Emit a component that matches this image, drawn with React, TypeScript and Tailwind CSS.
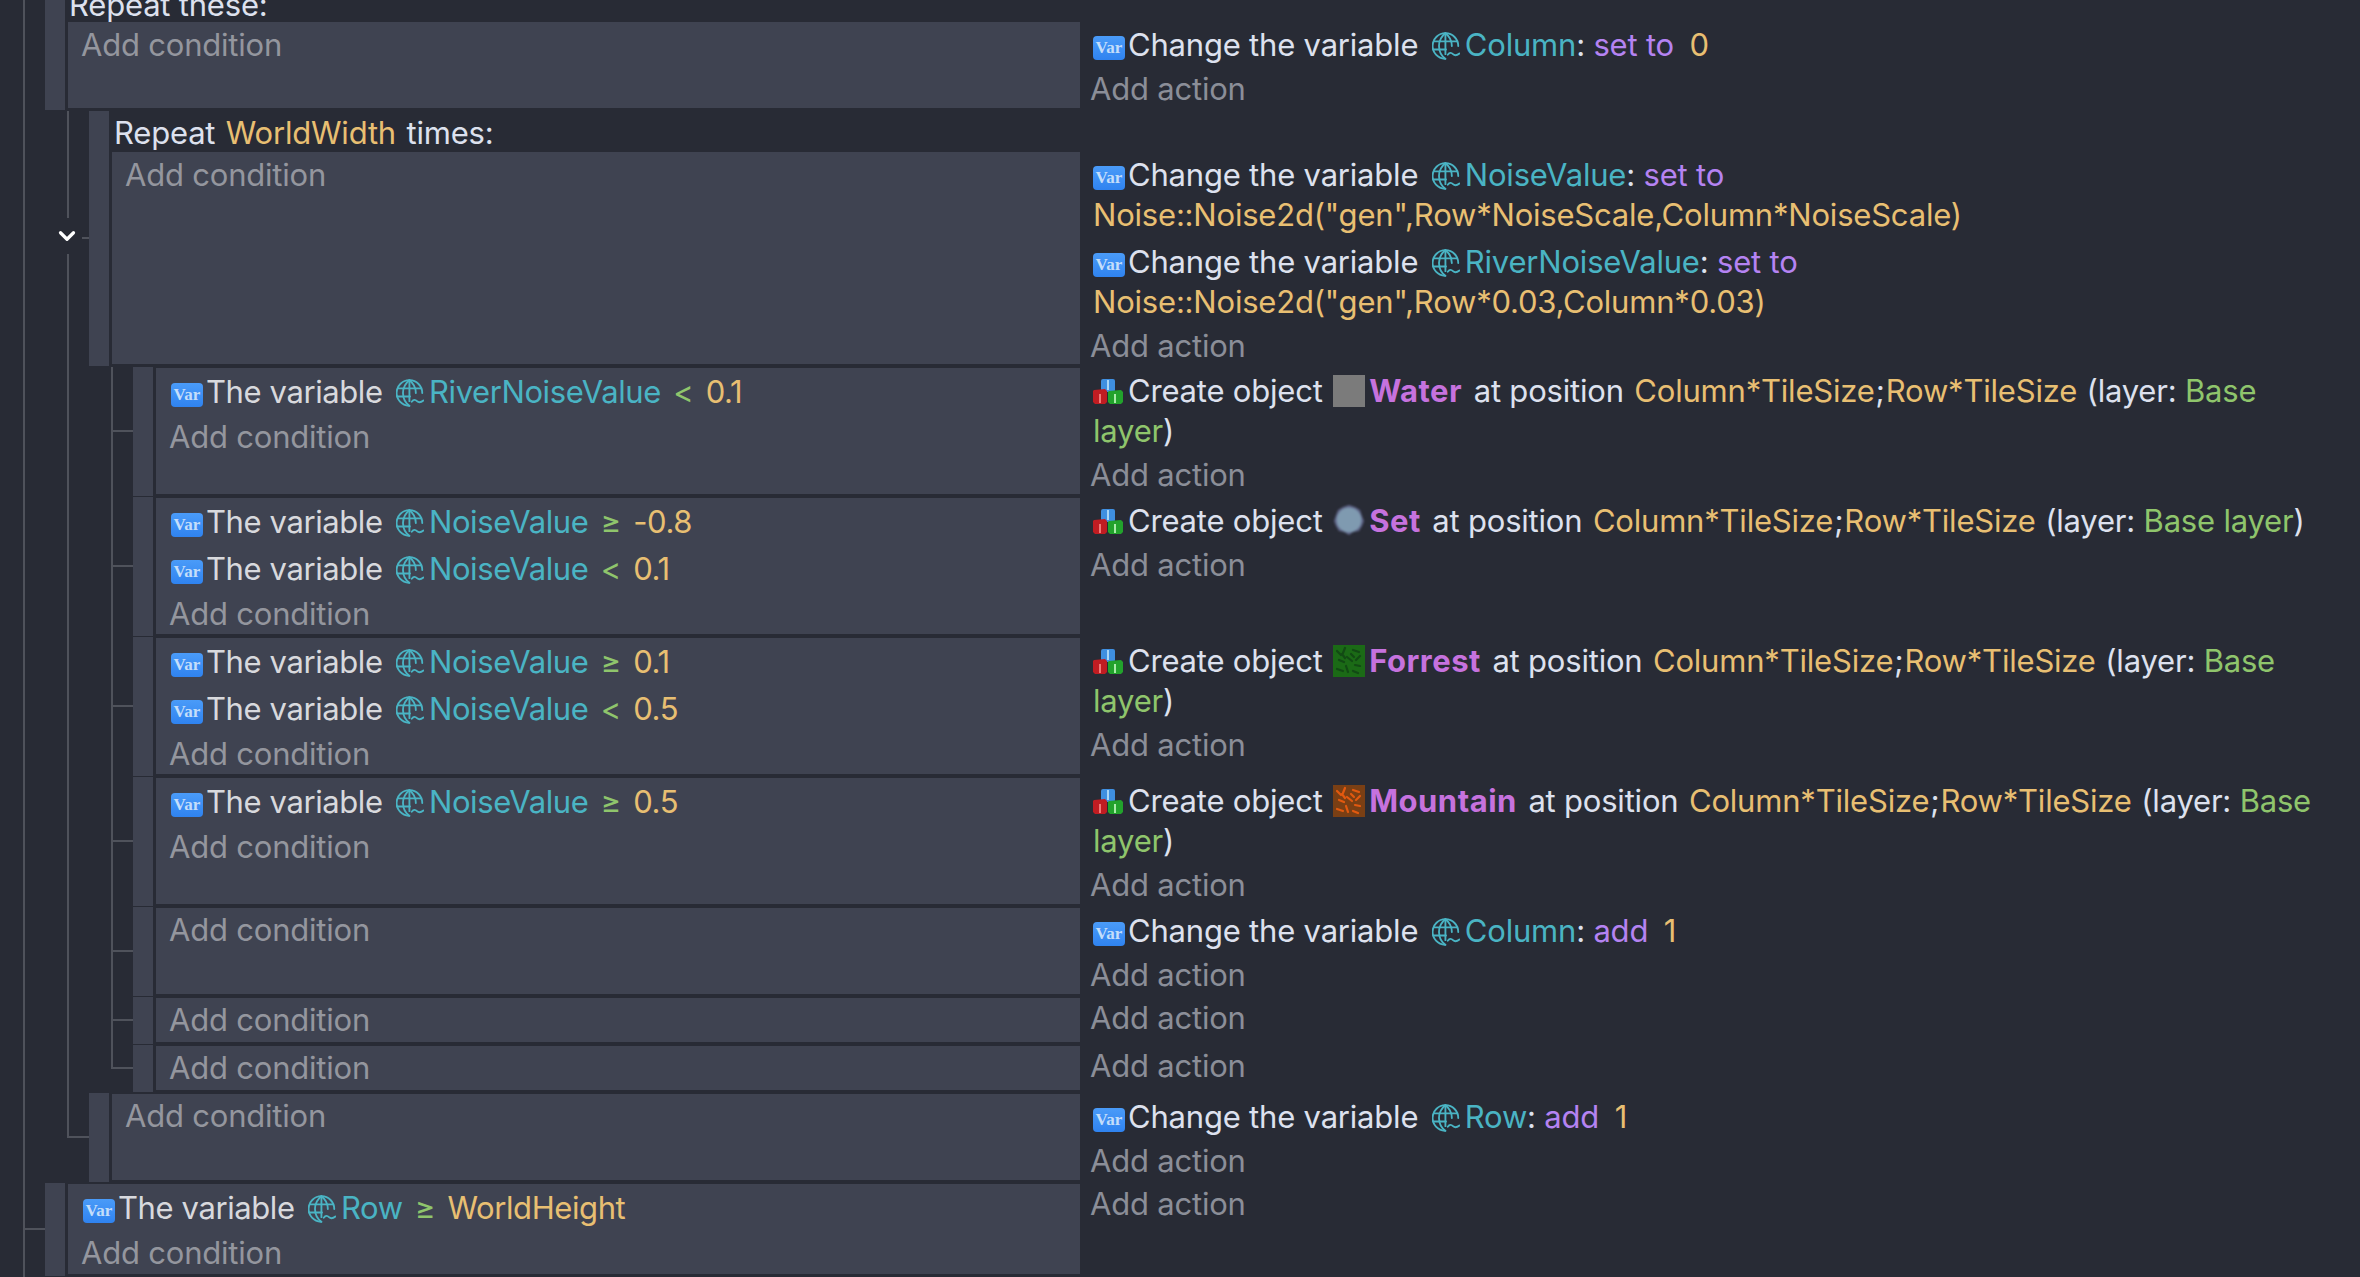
import * as React from 'react'
import { ChevronDown } from 'lucide-react'

type Guide = 'pass' | 'tick' | 'end' | 'chevron'

// small inline pieces of the event sheet text
const Val = ({ children, gap }: { children: React.ReactNode; gap?: boolean }) => (
  <span className={gap ? 'ml-[7px] text-[#e8bf72]' : 'text-[#e8bf72]'}>{children}</span>
)
const Op = ({ children }: { children: React.ReactNode }) => (
  <span className="mx-[4px] text-[#8fc56c]">{children}</span>
)
const Mode = ({ children }: { children: React.ReactNode }) => <span className="text-[#b583f2]">{children}</span>
const Layer = ({ children }: { children: React.ReactNode }) => <span className="text-[#8fc56c]">{children}</span>
const Obj = ({ children }: { children: React.ReactNode }) => (
  <span className="mr-[3px] font-bold tracking-[0.5px] text-[#c672de]">{children}</span>
)

// the tail shared by all "Create object" actions
const AtPosition = () => (
  <>
    {' '}
    at position <span className="ml-[2px]" />
    <Val>Column*TileSize</Val>
    <span className="mx-[1px]">;</span>
    <Val>Row*TileSize</Val> <span className="ml-[1px]">(layer:</span> <Layer>Base layer</Layer>)
  </>
)

function VarIcon() {
  return (
    <span className="mr-[3px] inline-flex h-[24px] w-[32px] items-center justify-center rounded-[4px] bg-linear-to-b from-[#4a9bf8] to-[#2f83f0] align-[3px] font-['Liberation_Serif',serif] text-[17px] leading-none font-bold tracking-normal text-[#c4defa]">
      Var
    </span>
  )
}

function GlobeVar({ children }: { children: React.ReactNode }) {
  return (
    <span className="text-[#4ab4c4]">
      <svg viewBox="2 2 24 24" className="mr-[5px] ml-[5px] inline-block h-[28px] w-[28px] align-[-4px]" fill="none" stroke="currentColor" strokeWidth="1.6" strokeLinecap="round">
        <path d="M24.5 14A11 11 0 1 0 13 25" />
        <path d="M13.5 3C9.5 6 8 10 8 14s1.5 8 5.5 11" />
        <path d="M13.5 3c4 3 5.500 7 5.500 11" />
        <path d="M13.500 3v18" />
        <path d="M3.500 10h20M3 17h11" />
        <path d="M15.500 21.500c1.500-2 3-2 4.500-.5s3 1.500 5.500-.5" />
      </svg>
      {children}
    </span>
  )
}

function CreateIcon() {
  return (
    <svg viewBox="0 0 30 26" className="mr-[5px] inline-block h-[26px] w-[30px] align-[-3px]">
      <rect x="8" y="0" width="14" height="13" rx="2" fill="#3f8fe0" />
      <rect x="14" y="1" width="2" height="10" fill="#a8d6f7" />
      <path d="M1 11l11-1 2 2v11l-2 2H2l-2-2V12z" fill="#c01c22" />
      <rect x="6" y="15" width="2" height="9" fill="#f07878" />
      <path d="M16 12l12-1 2 2v10l-2 2H17l-2-2V13z" fill="#22a32c" />
      <rect x="21" y="15" width="2" height="9" fill="#a8eca8" />
    </svg>
  )
}

function Texture({ base, spot }: { base: string; spot: string }) {
  const marks = 'M4 6l4 4M12 3l-2 5M20 5l6 2M27 11l-4 4M6 15l5 2M14 12l5 4M22 20l5 1M4 24l6 2M13 21l2 6M20 26l5 2M9 9l3 4M18 9l3 3'
  return (
    <svg viewBox="0 0 32 32" className="mr-[4px] ml-[2px] inline-block h-[32px] w-[32px] align-[-5px]">
      <rect width="32" height="32" fill={base} />
      <path d={marks} stroke={spot} strokeWidth="2.200" strokeLinecap="round" />
    </svg>
  )
}

function WaterIcon() {
  return <span className="mr-[4px] ml-[2px] inline-block h-[32px] w-[32px] bg-[#7b7b7b] align-[-5px]" />
}

function SetIcon() {
  return (
    <svg viewBox="0 0 32 32" className="mr-[4px] ml-[2px] inline-block h-[32px] w-[32px] align-[-5px] blur-[1px]">
      <path d="M10 2l6-2 6 2 5 3 2 6 2 5-2 5-3 5-6 1-4 3-5-3-5-1-3-5-2-5 2-6 2-5z" fill="#5f6488" />
      <circle cx="16" cy="15" r="12.500" fill="#7f9ab0" />
    </svg>
  )
}

const Add = ({ children, cond }: { children: React.ReactNode; cond?: boolean }) => (
  <div className={cond ? 'pt-[2px] pl-[13px] text-[#94969e]' : 'pl-[10px] text-[#8b8e98]'}>{children}</div>
)

const Cond = ({ children }: { children: React.ReactNode }) => (
  <div className="pt-[4px] pb-[3px] pl-[15px] tracking-[-0.4px] text-[#d8d9dd]">
    <VarIcon />
    {children}
  </div>
)

const Act = ({ children, icon }: { children: React.ReactNode; icon?: 'var' | 'create' }) => (
  <div className="pt-[3px] pb-[4px] pl-[13px] text-[#dde1ee]">
    {icon === 'create' ? <CreateIcon /> : <VarIcon />}
    {children}
  </div>
)

function GuideCell({ kind, last }: { kind: Guide; last: boolean }) {
  const width = last ? 'w-[22px]' : 'w-[44px]'
  if (kind === 'end') {
    return (
      <div className={`${width} shrink-0`}>
        <div className="h-1/2 border-b-2 border-l-2 border-[#4f525b]" />
      </div>
    )
  }
  return (
    <div className={`${width} relative shrink-0 border-l-2 border-[#4f525b]`}>
      {(kind === 'tick' || kind === 'chevron') && <div className="h-1/2 border-b-2 border-[#4f525b]" />}
      {kind === 'chevron' && (
        <div className="absolute top-[107px] left-[-17px] flex h-[36px] w-[30px] items-center justify-center bg-[#282b35] text-white">
          <ChevronDown size={26} strokeWidth={3} />
        </div>
      )}
    </div>
  )
}

interface EventRowProps {
  guides: Guide[]
  heightClass: string
  header?: React.ReactNode
  conditions: React.ReactNode
  actions: React.ReactNode
  panelClass?: string
}

function EventRow({ guides, heightClass, header, conditions, actions, panelClass }: EventRowProps) {
  return (
    <div className={`flex ${heightClass} shrink-0`}>
      <div className="flex w-[1080px] shrink-0 pl-[23px]">
        {guides.map((g, i) => (
          <GuideCell key={i} kind={g} last={i === guides.length - 1} />
        ))}
        <div className="flex min-w-0 flex-1 pb-[1px]">
          <div className="w-[20px] shrink-0 bg-[#3f4351]" />
          <div className={`ml-[3px] flex min-w-0 flex-1 flex-col pb-[2px] ${header ? '' : 'pt-[1px]'}`}>
            {header}
            <div className={`flex-1 bg-[#3f4351] ${header ? 'pt-[1px]' : ''}`}>{conditions}</div>
          </div>
        </div>
      </div>
      <div className={`flex-1 pr-[40px] ${header ? panelClass === 'top' ? 'pt-[22px]' : 'pt-[41px]' : 'pt-[1px]'}`}>{actions}</div>
    </div>
  )
}

export default function App() {
  return (
    <div className="flex h-[1277px] w-[2360px] flex-col overflow-hidden bg-[#282b35] font-['Inter',sans-serif] text-[31px] leading-[40px] tracking-[-0.2px] text-[#dde1ee]">
      <EventRow
        guides={['pass']}
        heightClass="h-[111px]"
        panelClass="top"
        header={
          <div className="flex h-[22px] items-end">
            <span className="-mb-[3px] pl-[1px]">Repeat these:</span>
          </div>
        }
        conditions={<Add cond>Add condition</Add>}
        actions={
          <>
            <Act>
              Change the variable <GlobeVar>Column</GlobeVar>: <Mode>set to</Mode> <Val gap>0</Val>
            </Act>
            <Add>Add action</Add>
          </>
        }
      />
      <EventRow
        guides={['pass', 'chevron']}
        heightClass="h-[256px]"
        header={
          <div className="flex h-[41px] items-end">
            <span className="-mb-[1px] pl-[2px]">
              Repeat{' '}
              <span className="mx-[2px]">
                <Val>WorldWidth</Val>
              </span>{' '}
              times:
            </span>
          </div>
        }
        conditions={<Add cond>Add condition</Add>}
        actions={
          <>
            <Act>
              Change the variable <GlobeVar>NoiseValue</GlobeVar>: <Mode>set to</Mode>{' '}
              <Val>Noise::Noise2d("gen",Row*NoiseScale,Column*NoiseScale)</Val>
            </Act>
            <Act>
              Change the variable <GlobeVar>RiverNoiseValue</GlobeVar>: <Mode>set to</Mode>{' '}
              <Val>Noise::Noise2d("gen",Row*0.03,Column*0.03)</Val>
            </Act>
            <Add>Add action</Add>
          </>
        }
      />
      <EventRow
        guides={['pass', 'pass', 'tick']}
        heightClass="h-[130px]"
        conditions={
          <>
            <Cond>
              The variable <GlobeVar>RiverNoiseValue</GlobeVar> <Op>&lt;</Op> <Val>0.1</Val>
            </Cond>
            <Add cond>Add condition</Add>
          </>
        }
        actions={
          <>
            <Act icon="create">
              Create object <WaterIcon />
              <Obj>Water</Obj>
              <AtPosition />
            </Act>
            <Add>Add action</Add>
          </>
        }
      />
      <EventRow
        guides={['pass', 'pass', 'tick']}
        heightClass="h-[140px]"
        conditions={
          <>
            <Cond>
              The variable <GlobeVar>NoiseValue</GlobeVar> <Op>≥</Op> <Val>-0.8</Val>
            </Cond>
            <Cond>
              The variable <GlobeVar>NoiseValue</GlobeVar> <Op>&lt;</Op> <Val>0.1</Val>
            </Cond>
            <Add cond>Add condition</Add>
          </>
        }
        actions={
          <>
            <Act icon="create">
              Create object <SetIcon />
              <Obj>Set</Obj>
              <AtPosition />
            </Act>
            <Add>Add action</Add>
          </>
        }
      />
      <EventRow
        guides={['pass', 'pass', 'tick']}
        heightClass="h-[140px]"
        conditions={
          <>
            <Cond>
              The variable <GlobeVar>NoiseValue</GlobeVar> <Op>≥</Op> <Val>0.1</Val>
            </Cond>
            <Cond>
              The variable <GlobeVar>NoiseValue</GlobeVar> <Op>&lt;</Op> <Val>0.5</Val>
            </Cond>
            <Add cond>Add condition</Add>
          </>
        }
        actions={
          <>
            <Act icon="create">
              Create object <Texture base="#1b6a16" spot="#124a14" />
              <Obj>Forrest</Obj>
              <AtPosition />
            </Act>
            <Add>Add action</Add>
          </>
        }
      />
      <EventRow
        guides={['pass', 'pass', 'tick']}
        heightClass="h-[130px]"
        conditions={
          <>
            <Cond>
              The variable <GlobeVar>NoiseValue</GlobeVar> <Op>≥</Op> <Val>0.5</Val>
            </Cond>
            <Add cond>Add condition</Add>
          </>
        }
        actions={
          <>
            <Act icon="create">
              Create object <Texture base="#7a3f14" spot="#e2590f" />
              <Obj>Mountain</Obj>
              <AtPosition />
            </Act>
            <Add>Add action</Add>
          </>
        }
      />
      <EventRow
        guides={['pass', 'pass', 'tick']}
        heightClass="h-[90px]"
        conditions={<Add cond>Add condition</Add>}
        actions={
          <>
            <Act>
              Change the variable <GlobeVar>Column</GlobeVar>: <Mode>add</Mode> <Val gap>1</Val>
            </Act>
            <Add>Add action</Add>
          </>
        }
      />
      <EventRow
        guides={['pass', 'pass', 'tick']}
        heightClass="h-[48px]"
        conditions={<Add cond>Add condition</Add>}
        actions={<Add>Add action</Add>}
      />
      <EventRow
        guides={['pass', 'pass', 'end']}
        heightClass="h-[48px]"
        conditions={<Add cond>Add condition</Add>}
        actions={<Add>Add action</Add>}
      />
      <EventRow
        guides={['pass', 'end']}
        heightClass="h-[90px]"
        conditions={<Add cond>Add condition</Add>}
        actions={
          <>
            <Act>
              Change the variable <GlobeVar>Row</GlobeVar>: <Mode>add</Mode> <Val gap>1</Val>
            </Act>
            <Add>Add action</Add>
          </>
        }
      />
      <EventRow
        guides={['tick']}
        heightClass="h-[94px]"
        conditions={
          <>
            <Cond>
              The variable <GlobeVar>Row</GlobeVar> <Op>≥</Op> <Val>WorldHeight</Val>
            </Cond>
            <Add cond>Add condition</Add>
          </>
        }
        actions={<Add>Add action</Add>}
      />
    </div>
  )
}
